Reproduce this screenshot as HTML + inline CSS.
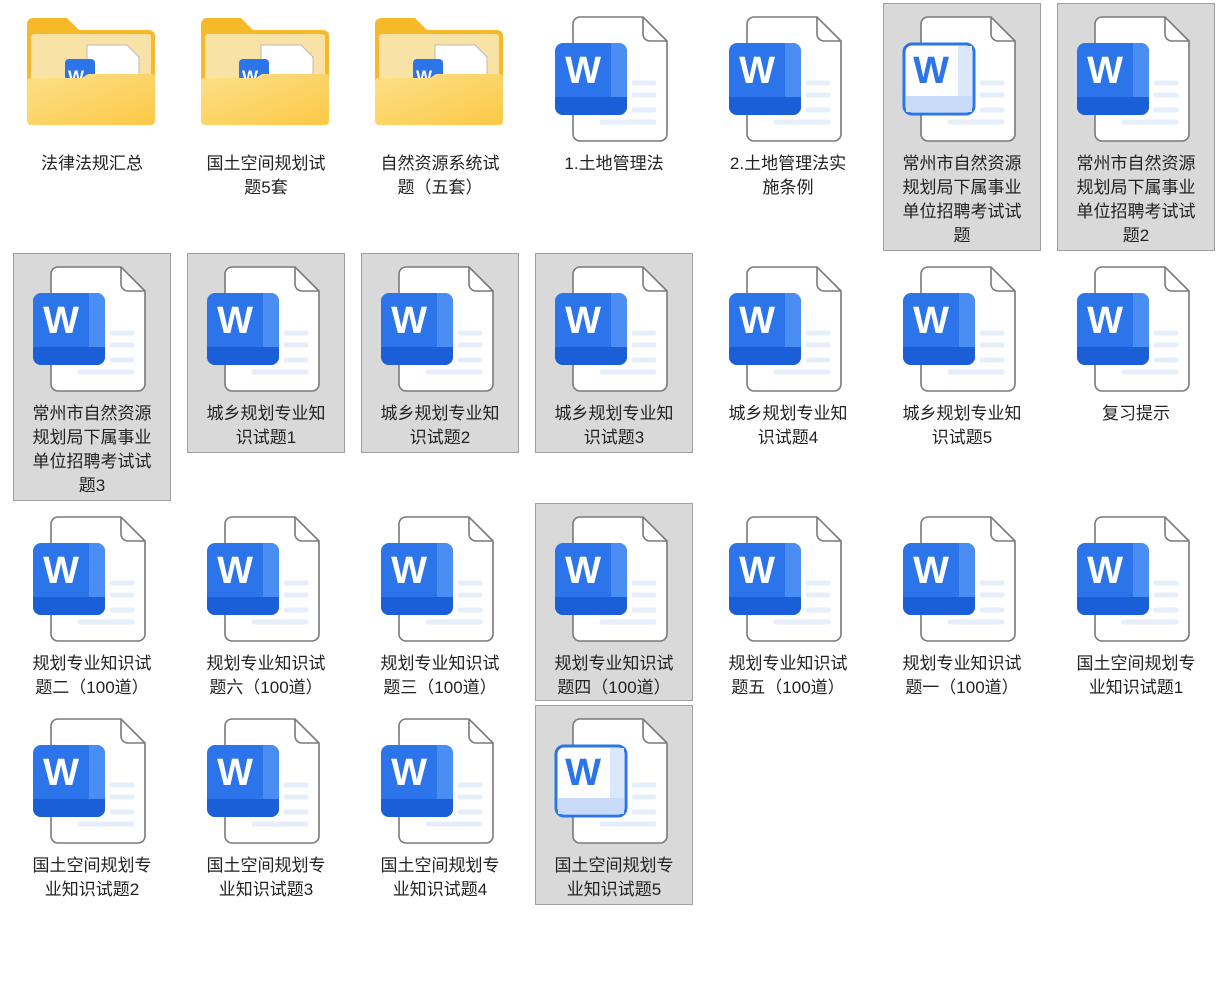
<!DOCTYPE html>
<html><head><meta charset="utf-8"><style>
body{margin:0;width:1224px;height:982px;background:#fff;position:relative;overflow:hidden;font-family:"Liberation Sans","Noto Sans CJK SC",sans-serif}
.it{position:absolute;width:158px;box-sizing:border-box;border:1px solid transparent}
.sel{background:#d9d9d9;border-color:#a0a0a0}
.it svg{position:absolute;left:18px;top:12px}
.t{position:absolute;top:148px;left:0;width:156px;text-align:center;font-size:17px;line-height:24px;color:#222}
</style></head><body>
<svg width="0" height="0" style="position:absolute">
<defs>
<linearGradient id="fg" x1="0" y1="0" x2="1" y2="1"><stop offset="0" stop-color="#fde08a"/><stop offset="1" stop-color="#fcc945"/></linearGradient>
<g id="doc">
<path d="M19 8a7 7 0 0 1 7-7h63l24 24v93a7 7 0 0 1-7 7H26a7 7 0 0 1-7-7z" fill="#fff" stroke="#7a7a7a" stroke-width="1.6"/>
<path d="M89 1v17a7 7 0 0 0 7 7h17" fill="none" stroke="#7a7a7a" stroke-width="1.6"/>
<g stroke="#e6eefb" stroke-width="5" stroke-linecap="round"><line x1="80" y1="67" x2="100" y2="67"/><line x1="80" y1="79" x2="100" y2="79"/><line x1="80" y1="94" x2="100" y2="94"/><line x1="48" y1="106" x2="100" y2="106"/></g>
</g>
<g id="wb">
<rect x="1" y="27" width="72" height="72" rx="8" fill="#2b74ea"/>
<path d="M57 27h8a8 8 0 0 1 8 8v56a8 8 0 0 1-8 8h-8z" fill="#4a8df3"/>
<path d="M1 81h72v10a8 8 0 0 1-8 8H9a8 8 0 0 1-8-8z" fill="#1a5fd8"/>
<text x="29" y="67" font-family="Liberation Sans,sans-serif" font-weight="bold" font-size="38" fill="#fff" text-anchor="middle">W</text>
</g>
<g id="wl">
<rect x="2" y="28" width="70" height="70" rx="8" fill="#fff" stroke="#2b74ea" stroke-width="3"/>
<rect x="56" y="30" width="14" height="66" fill="#dbe7fb"/>
<rect x="4" y="80" width="66" height="16" fill="#c9dbf8"/>
<text x="29" y="67" font-family="Liberation Sans,sans-serif" font-weight="bold" font-size="38" fill="#2b74ea" text-anchor="middle">W</text>
</g>
<g id="fold">
<path d="M8 12a6 6 0 0 1 6-6h34l12 12h70a6 6 0 0 1 6 6v85H8z" fill="#f5b92a"/>
<rect x="12" y="22" width="120" height="60" rx="3" fill="#f8e2a6"/>
<path d="M68 33h40l12 12v40H68z" fill="#fff" stroke="#bbb"/>
<rect x="46" y="47" width="30" height="30" rx="4" fill="#2b74ea"/>
<text x="57" y="70" font-family="Liberation Sans,sans-serif" font-weight="bold" font-size="17" fill="#fff" text-anchor="middle">W</text>
<path d="M8 69a3 3 0 0 1 3-3h52l6-4h64a3 3 0 0 1 3 3v44a4 4 0 0 1-4 4H12a4 4 0 0 1-4-4z" fill="url(#fg)"/>
</g>
</defs></svg>

<!-- row 1 -->
<div class="it" style="left:13px;top:3px;height:150px"><svg width="140" height="126" style="left:5px;top:8px"><use href="#fold"/></svg><div class="t">法律法规汇总</div></div>
<div class="it" style="left:187px;top:3px"><svg width="140" height="126" style="left:5px;top:8px"><use href="#fold"/></svg><div class="t">国土空间规划试<br>题5套</div></div>
<div class="it" style="left:361px;top:3px"><svg width="140" height="126" style="left:5px;top:8px"><use href="#fold"/></svg><div class="t">自然资源系统试<br>题（五套）</div></div>
<div class="it" style="left:535px;top:3px"><svg width="120" height="126"><use href="#doc"/><use href="#wb"/></svg><div class="t">1.土地管理法</div></div>
<div class="it" style="left:709px;top:3px"><svg width="120" height="126"><use href="#doc"/><use href="#wb"/></svg><div class="t">2.土地管理法实<br>施条例</div></div>
<div class="it sel" style="left:883px;top:3px;height:248px"><svg width="120" height="126"><use href="#doc"/><use href="#wl"/></svg><div class="t">常州市自然资源<br>规划局下属事业<br>单位招聘考试试<br>题</div></div>
<div class="it sel" style="left:1057px;top:3px;height:248px"><svg width="120" height="126"><use href="#doc"/><use href="#wb"/></svg><div class="t">常州市自然资源<br>规划局下属事业<br>单位招聘考试试<br>题2</div></div>
<!-- row 2 -->
<div class="it sel" style="left:13px;top:253px;height:248px"><svg width="120" height="126"><use href="#doc"/><use href="#wb"/></svg><div class="t">常州市自然资源<br>规划局下属事业<br>单位招聘考试试<br>题3</div></div>
<div class="it sel" style="left:187px;top:253px;height:200px"><svg width="120" height="126"><use href="#doc"/><use href="#wb"/></svg><div class="t">城乡规划专业知<br>识试题1</div></div>
<div class="it sel" style="left:361px;top:253px;height:200px"><svg width="120" height="126"><use href="#doc"/><use href="#wb"/></svg><div class="t">城乡规划专业知<br>识试题2</div></div>
<div class="it sel" style="left:535px;top:253px;height:200px"><svg width="120" height="126"><use href="#doc"/><use href="#wb"/></svg><div class="t">城乡规划专业知<br>识试题3</div></div>
<div class="it" style="left:709px;top:253px"><svg width="120" height="126"><use href="#doc"/><use href="#wb"/></svg><div class="t">城乡规划专业知<br>识试题4</div></div>
<div class="it" style="left:883px;top:253px"><svg width="120" height="126"><use href="#doc"/><use href="#wb"/></svg><div class="t">城乡规划专业知<br>识试题5</div></div>
<div class="it" style="left:1057px;top:253px"><svg width="120" height="126"><use href="#doc"/><use href="#wb"/></svg><div class="t">复习提示</div></div>
<!-- row 3 -->
<div class="it" style="left:13px;top:503px"><svg width="120" height="126"><use href="#doc"/><use href="#wb"/></svg><div class="t">规划专业知识试<br>题二（100道）</div></div>
<div class="it" style="left:187px;top:503px"><svg width="120" height="126"><use href="#doc"/><use href="#wb"/></svg><div class="t">规划专业知识试<br>题六（100道）</div></div>
<div class="it" style="left:361px;top:503px"><svg width="120" height="126"><use href="#doc"/><use href="#wb"/></svg><div class="t">规划专业知识试<br>题三（100道）</div></div>
<div class="it sel" style="left:535px;top:503px;height:198px"><svg width="120" height="126"><use href="#doc"/><use href="#wb"/></svg><div class="t">规划专业知识试<br>题四（100道）</div></div>
<div class="it" style="left:709px;top:503px"><svg width="120" height="126"><use href="#doc"/><use href="#wb"/></svg><div class="t">规划专业知识试<br>题五（100道）</div></div>
<div class="it" style="left:883px;top:503px"><svg width="120" height="126"><use href="#doc"/><use href="#wb"/></svg><div class="t">规划专业知识试<br>题一（100道）</div></div>
<div class="it" style="left:1057px;top:503px"><svg width="120" height="126"><use href="#doc"/><use href="#wb"/></svg><div class="t">国土空间规划专<br>业知识试题1</div></div>
<!-- row 4 -->
<div class="it" style="left:13px;top:705px"><svg width="120" height="126"><use href="#doc"/><use href="#wb"/></svg><div class="t">国土空间规划专<br>业知识试题2</div></div>
<div class="it" style="left:187px;top:705px"><svg width="120" height="126"><use href="#doc"/><use href="#wb"/></svg><div class="t">国土空间规划专<br>业知识试题3</div></div>
<div class="it" style="left:361px;top:705px"><svg width="120" height="126"><use href="#doc"/><use href="#wb"/></svg><div class="t">国土空间规划专<br>业知识试题4</div></div>
<div class="it sel" style="left:535px;top:705px;height:200px"><svg width="120" height="126"><use href="#doc"/><use href="#wl"/></svg><div class="t">国土空间规划专<br>业知识试题5</div></div>
</body></html>
